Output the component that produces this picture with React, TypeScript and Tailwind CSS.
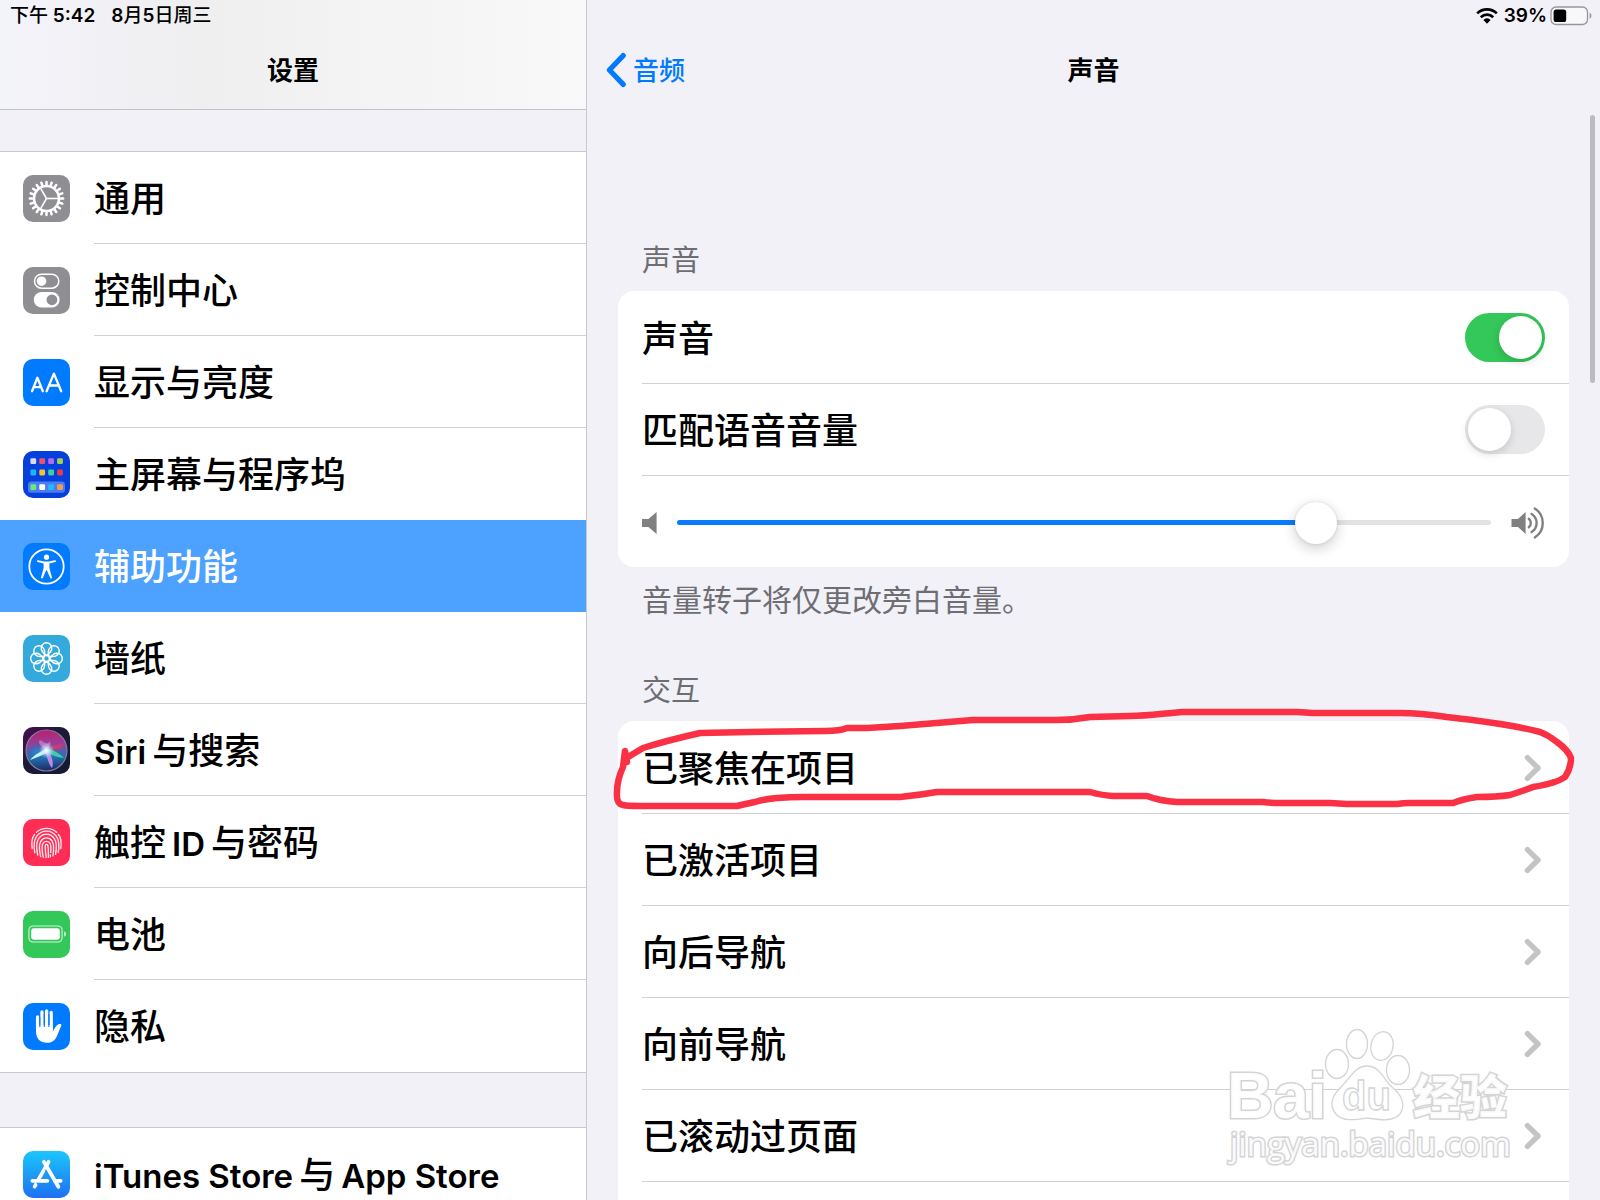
import { useState, type ReactNode } from "react";

function Tile({ bg, children }: { bg: string; children: ReactNode }) {
  return (
    <svg viewBox="0 0 47 47" className="size-[47px] flex-none" aria-hidden="true">
      <rect width="47" height="47" rx="10" fill={bg} />
      {children}
    </svg>
  );
}

const range = (n: number) => Array.from({ length: n }, (_, i) => i);

function GearIcon() {
  return (
    <Tile bg="#8e8e93">
      <g stroke="#fff" fill="none" transform="translate(23.5 23.5)">
        <circle r="12.4" strokeWidth="2.5" />
        {range(20).map((i) => (
          <path key={i} d="M13 0H16.6" strokeWidth="2.5" strokeLinecap="round" transform={`rotate(${i * 18})`} />
        ))}
        {[0, 120, 240].map((a) => (
          <path key={a} d="M0 0H12" strokeWidth="1.6" transform={`rotate(${a})`} />
        ))}
      </g>
    </Tile>
  );
}

function ControlIcon() {
  return (
    <Tile bg="#8e8e93">
      <rect x="11.5" y="7.2" width="24.3" height="14" rx="7" fill="none" stroke="#fff" strokeWidth="1.5" />
      <circle cx="18.5" cy="14.2" r="4.8" fill="#fff" />
      <rect x="10.8" y="25" width="25.8" height="15.6" rx="7.8" fill="#fff" />
      <circle cx="28.9" cy="32.8" r="5.4" fill="#8e8e93" />
    </Tile>
  );
}

function DisplayIcon() {
  return (
    <Tile bg="#007aff">
      <g fill="none" stroke="#fff" strokeWidth="2.3" strokeLinecap="round" strokeLinejoin="round">
        <path d="M9 32.3 14.4 18.8 19.8 32.3M10.8 28.1H18" />
        <path d="M23.6 32.3 30.9 14.6 38.2 32.3M26.1 26.5H35.7" />
      </g>
    </Tile>
  );
}

const dockDots = [
  ["#d9dbe6", "#f0506a", "#b06cf6", "#a4d24c"],
  ["#1fb4f8", "#f7c32e", "#3bd0a8", "#ef3b45"],
  ["#67ea78", "#ffffff", "#22bdf8", "#f79a4e"],
];

function HomeIcon() {
  return (
    <Tile bg="#0640dc">
      <rect x="5" y="30.4" width="37" height="11.4" rx="3.4" fill="#4d7cf0" />
      {dockDots.map((row, r) =>
        row.map((c, i) => (
          <rect key={`${r}-${i}`} x={7.4 + i * 8.9} y={[7.3, 18.6, 33.2][r]} width="5.8" height="5.8" rx="1.3" fill={c} />
        )),
      )}
    </Tile>
  );
}

function AccessIcon() {
  return (
    <Tile bg="#007aff">
      <circle cx="23.5" cy="23.5" r="17.2" fill="none" stroke="#fff" strokeWidth="1.8" />
      <circle cx="23.5" cy="14.2" r="2.6" fill="#fff" />
      <path
        d="M15 17.2 21.5 18.4H25.5L32 17.2A.8.8 0 0 1 32.3 18.9L26.4 20.5V25L28.9 34.2A.9.9 0 0 1 27.2 34.9L23.9 27.2H23.1L19.8 34.9A.9.9 0 0 1 18.1 34.2L20.6 25V20.5L14.7 18.9A.8.8 0 0 1 15 17.2Z"
        fill="#fff"
      />
    </Tile>
  );
}

function WallpaperIcon() {
  return (
    <Tile bg="#34aadc">
      <g transform="translate(23.5 23.5)" fill="none" stroke="#fff" strokeWidth="1.4">
        {range(8).map((i) => (
          <path
            key={i}
            d="M0 -3.2C-3.4 -5.4 -5.5 -8 -5.2 -10.8A5.2 5 0 0 1 5.2 -10.8C5.5 -8 3.4 -5.4 0 -3.2Z"
            transform={`rotate(${i * 45})`}
          />
        ))}
        <circle r="2.9" />
      </g>
    </Tile>
  );
}

function SiriIcon() {
  return (
    <svg viewBox="0 0 47 47" className="size-[47px] flex-none" aria-hidden="true">
      <defs>
        <linearGradient id="siri-bg" x1="0" y1="0" x2="1" y2="1">
          <stop offset="0" stopColor="#4a0f52" />
          <stop offset=".45" stopColor="#1b1a38" />
          <stop offset="1" stopColor="#141a33" />
        </linearGradient>
        <linearGradient id="siri-orb" x1=".45" y1="0" x2=".5" y2="1">
          <stop offset="0" stopColor="#b8206f" />
          <stop offset=".4" stopColor="#93449f" />
          <stop offset=".65" stopColor="#2473b4" />
          <stop offset="1" stopColor="#1c2a63" />
        </linearGradient>
        <radialGradient id="siri-glow">
          <stop offset="0" stopColor="#fff" />
          <stop offset=".35" stopColor="#d5f4ff" stopOpacity=".8" />
          <stop offset="1" stopColor="#7fd0ff" stopOpacity="0" />
        </radialGradient>
        <radialGradient id="siri-blue">
          <stop offset="0" stopColor="#1a93d6" stopOpacity=".95" />
          <stop offset="1" stopColor="#1a63b6" stopOpacity="0" />
        </radialGradient>
      </defs>
      <rect width="47" height="47" rx="10" fill="url(#siri-bg)" />
      <circle cx="23.5" cy="23.5" r="20.5" fill="url(#siri-orb)" stroke="#8c7f9e" strokeWidth="1.1" />
      <circle cx="13.5" cy="25" r="10.5" fill="url(#siri-blue)" />
      <path d="M23 23C30 18 37 16 41 18 37 22 31 23 23 24Z" fill="#dd3a5e" opacity=".75" />
      <path d="M23 23C18 20 14 15 17 13 21 15 25 19 27 14 28 19 26 22 23 23Z" fill="#d58fd5" opacity=".6" />
      <path d="M24 22C18 24 11 28 7 33 14 30 21 28 25 25Z" fill="#d9fbff" opacity=".95" />
      <path d="M24 21.5C31 23 37 27 41 31 34 30.5 28 28 24 25Z" fill="#3fd6ab" opacity=".9" />
      <path d="M22 24C24.5 31 25.5 37 29 41 31.5 35 28 28 25 23Z" fill="#d18df0" opacity=".9" />
      <circle cx="23.5" cy="23.5" r="8" fill="url(#siri-glow)" />
    </svg>
  );
}

function TouchIdIcon() {
  return (
    <Tile bg="#ff2d55">
      <g fill="none" stroke="#fff" strokeOpacity=".9" strokeWidth="1.35" strokeLinecap="round">
        <path d="M13.5 13.2A15 15 0 0 1 33.6 13.2" />
        <path d="M9.2 29.6C8.2 23 9 18.6 11.6 15.4M35.4 15.4C38 18.6 38.8 23 37.8 29.6" />
        <path d="M11.8 33.6C10.6 27 10.8 21.6 13.4 17.6 18.6 10.2 28.4 10.2 33.6 17.6 36.2 21.6 36.4 27 35.2 33.4" />
        <path d="M14.7 36C13.2 29 13.2 23.8 15.4 20 19.4 13.6 27.6 13.6 31.6 20 33.8 23.8 33.8 29 32.5 35.4" />
        <path d="M17.6 37.6C16 30.6 15.6 25.4 18 21.8 20.8 17.8 26.2 17.8 29 21.8 31 25 30.8 31 30 36.8" />
        <path d="M20.3 38.4C19 32.6 18.2 27 20.2 24 21.9 21.8 25.1 21.8 26.8 24 28.4 26.6 28 30.4 27.7 33.4M27.4 35.8V37.8" />
        <path d="M23.2 38.6C22.8 34 21.4 27.6 22.6 25.8 23.2 25.2 24 25.2 24.6 26 25.6 28.6 25.4 33.6 25.4 38.4" />
      </g>
    </Tile>
  );
}

function BatteryTileIcon() {
  return (
    <Tile bg="#34c759">
      <rect x="5.9" y="15" width="33.2" height="16" rx="4.2" fill="none" stroke="#fff" strokeOpacity=".8" strokeWidth="1.1" />
      <rect x="8.2" y="17.3" width="28.6" height="11.4" rx="2.4" fill="#fff" />
      <path d="M41.2 20.3C43.6 21.4 43.6 24.6 41.2 25.7Z" fill="#fff" fillOpacity=".8" />
    </Tile>
  );
}

function PrivacyIcon() {
  return (
    <Tile bg="#007aff">
      <g stroke="#fff" strokeWidth="3.3" strokeLinecap="round" fill="none">
        <path d="M14.6 14V27M19 9V26M23.6 7.8V26M28.2 9.4V26" />
      </g>
      <path
        d="M13 22H29.9V28.4C32.2 24.8 33.2 22.2 35.6 21.3 37 20.8 38.8 21.2 38.3 22.6L34.2 32.4C32.2 37.2 29 39.8 24 39.8 17 39.8 13 35.4 13 28.6Z"
        fill="#fff"
      />
      <path d="M16.8 14V24M21.3 11V24M25.9 11V24" stroke="#007aff" strokeWidth="1.1" />
    </Tile>
  );
}

function AppStoreIcon() {
  return (
    <svg viewBox="0 0 47 47" className="size-[47px] flex-none" aria-hidden="true">
      <defs>
        <linearGradient id="store" x1="0" y1="0" x2="0" y2="1">
          <stop offset="0" stopColor="#1cc6fb" />
          <stop offset="1" stopColor="#1d70f2" />
        </linearGradient>
      </defs>
      <rect width="47" height="47" rx="10" fill="url(#store)" />
      <g stroke="#fff" strokeWidth="3.7" strokeLinecap="round" fill="none">
        <path d="M25.6 10.8 15.4 28.6M12.6 33.8 11.6 35.6" />
        <path d="M20.9 10.8 35.4 35.8" />
        <path d="M9.3 29.8H24.4M31.6 29.8H37.7" />
      </g>
      <path d="M22.2 18.6 33.4 38" stroke="#1d93f6" strokeWidth="1" />
    </svg>
  );
}

const mainItems = [
  { label: "通用", icon: <GearIcon /> },
  { label: "控制中心", icon: <ControlIcon /> },
  { label: "显示与亮度", icon: <DisplayIcon /> },
  { label: "主屏幕与程序坞", icon: <HomeIcon /> },
  { label: "辅助功能", icon: <AccessIcon /> },
  { label: "墙纸", icon: <WallpaperIcon /> },
  { label: "Siri与搜索", icon: <SiriIcon /> },
  { label: "触控ID与密码", icon: <TouchIdIcon /> },
  { label: "电池", icon: <BatteryTileIcon /> },
  { label: "隐私", icon: <PrivacyIcon /> },
];
const storeItems = [{ label: "iTunes Store 与 App Store", icon: <AppStoreIcon /> }];
const selected = "辅助功能";

/* Latin runs sit slightly smaller and heavier than the Chinese around them. */
function MixedLabel({ text }: { text: string }) {
  const parts = text.split(/([A-Za-z][A-Za-z ]*[A-Za-z])/).filter(Boolean);
  return (
    <span className="flex items-baseline gap-[6px]">
      {parts.map((part) => (
        <span key={part} className={/[A-Za-z]/.test(part) ? "text-[33px] font-semibold" : ""}>
          {part}
        </span>
      ))}
    </span>
  );
}

function NavGroup({ items }: { items: typeof mainItems }) {
  return (
    <ul className="flex-none border-y border-[#c9c9cd] bg-white">
      {items.map((item, i) => {
        const active = item.label === selected;
        const line = !active && i < items.length - 1 && items[i + 1].label !== selected;
        return (
          <li key={item.label}>
            <button
              type="button"
              aria-current={active ? "page" : undefined}
              className={`flex h-[92px] w-full items-center pl-[23px] text-left ${active ? "bg-[#4da1ff] text-white" : "text-black"}`}
            >
              {item.icon}
              <span
                className={`ml-6 flex h-full flex-1 items-center border-b pt-[2px] text-4xl font-medium whitespace-nowrap ${line ? "border-[#d1d1d4]" : "border-transparent"}`}
              >
                <MixedLabel text={item.label} />
              </span>
            </button>
          </li>
        );
      })}
    </ul>
  );
}

function Toggle({ label, initial }: { label: string; initial: boolean }) {
  const [on, setOn] = useState(initial);
  return (
    <label className="flex h-[92px] items-center justify-between border-b border-[#d1d1d4] pr-6 text-4xl font-medium">
      <span className="pt-[2px]">{label}</span>
      <input
        type="checkbox"
        role="switch"
        checked={on}
        onChange={(e) => setOn(e.target.checked)}
        className="flex h-[49px] w-20 appearance-none items-center rounded-full bg-[#e7e7e9] p-[3px] before:size-[43px] before:rounded-full before:bg-white before:shadow-[0_3px_8px_rgba(0,0,0,0.15)] checked:justify-end checked:bg-[#34c759]"
      />
    </label>
  );
}

function VolumeSlider() {
  const [value, setValue] = useState(80);
  return (
    <div className="flex h-[91px] items-center pt-[2px] pr-6">
      <svg viewBox="0 0 15 24" className="h-6 w-[15px] flex-none" fill="#808080" aria-hidden="true">
        <path d="M0 8H6.4L14.6 1V23L6.4 16H0Z" />
      </svg>
      <input
        type="range"
        aria-label="音量"
        value={value}
        onChange={(e) => setValue(Number(e.target.value))}
        style={{ background: `linear-gradient(to right, #0a7aff ${value}%, #e3e3e5 ${value}%)` }}
        className="mx-5 h-[5px] min-w-0 flex-1 appearance-none rounded-full [&::-webkit-slider-thumb]:size-[42px] [&::-webkit-slider-thumb]:appearance-none [&::-webkit-slider-thumb]:rounded-full [&::-webkit-slider-thumb]:bg-white [&::-webkit-slider-thumb]:shadow-[0_4px_14px_rgba(0,0,0,0.2),0_0_3px_rgba(0,0,0,0.12)]"
      />
      <svg viewBox="0 0 34 34" className="size-[34px] flex-none" aria-hidden="true">
        <path d="M.5 13H7L14.6 6V28L7 21H.5Z" fill="#808080" />
        <g fill="none" stroke="#808080" strokeWidth="2.4" strokeLinecap="round">
          <path d="M17.8 12.8A5.4 5.4 0 0 1 17.8 21.2" />
          <path d="M20.6 8A10.6 10.6 0 0 1 20.6 26" />
          <path d="M23.8 2.6A17 17 0 0 1 23.8 31.4" />
        </g>
      </svg>
    </div>
  );
}

function Chevron() {
  return (
    <svg viewBox="0 0 18 28" className="h-7 w-[18px] flex-none" fill="none" aria-hidden="true">
      <path d="M3.4 3.6 14 14 3.4 24.4" stroke="#c4c4c7" strokeWidth="5.4" strokeLinecap="round" strokeLinejoin="round" />
    </svg>
  );
}

function RedCircle() {
  return (
    <svg
      viewBox="618 722 951 92"
      preserveAspectRatio="none"
      className="pointer-events-none absolute inset-0 h-full w-full overflow-visible"
      fill="none"
      aria-hidden="true"
    >
      <path
        d="M627 762 625 751 623 767Q617 780 617 792Q616 804 623 805Q627 806 640 806H737Q745 804 755 802 765 799 777 798 790 797 803 797H900Q920 795 937 792H1090Q1100 795 1113 796H1147Q1160 801 1177 802H1263Q1270 803 1280 803H1330L1347 804H1397Q1403 803 1410 803H1453Q1463 799 1477 797 1497 797 1510 795 1520 792 1533 787 1557 783 1565 777 1571 768 1571 758 1568 750 1557 742 1548 735 1540 732 1510 724 1447 717 1420 713 1400 713H1313L1297 712H1183C1165 713 1150 716 1130 716L1090 717Q1073 720 1057 720H973L900 726 867 728H847Q840 731 825 731L750 732 700 733Q665 741 643 748L628 757"
        stroke="#fa3144"
        strokeWidth="6.5"
        strokeLinecap="round"
        strokeLinejoin="round"
      />
    </svg>
  );
}

function Watermark() {
  return (
    <svg
      viewBox="0 0 300 140"
      className="pointer-events-none absolute right-[80px] bottom-[30px] h-[140px] w-[300px] overflow-visible [font-family:'Open_Sans','Noto_Sans_CJK_SC',sans-serif]"
      fill="#fff"
      fillOpacity=".93"
      stroke="#d4d4d6"
      strokeWidth="1.3"
      aria-hidden="true"
    >
      <g paintOrder="stroke">
        <text x="7" y="88" fontSize="64" fontWeight="700" strokeWidth="3" fontFamily="Liberation Sans">
          Bai
        </text>
        <text x="193" y="84" fontSize="47" fontWeight="900" strokeWidth="3">
          经验
        </text>
        <text x="10" y="126" fontSize="33" strokeWidth="3">
          jingyan.baidu.com
        </text>
      </g>
      <ellipse cx="117" cy="34" rx="11.5" ry="14.5" />
      <ellipse cx="137" cy="14" rx="10.5" ry="14.5" />
      <ellipse cx="162" cy="16" rx="11" ry="14.5" transform="rotate(12 162 16)" />
      <ellipse cx="178" cy="40" rx="11.5" ry="14.5" />
      <path d="M147 36C160 36 164 50 172 57 182 65 186 75 180 84 173 92 160 90 147 88 134 90 122 92 115 83 108 72 114 64 122 56 130 48 135 36 147 36Z" />
      <text x="122" y="80" fontSize="40" fontWeight="700" fontFamily="Liberation Sans">
        du
      </text>
    </svg>
  );
}

const soundRows = ["已聚焦在项目", "已激活项目", "向后导航", "向前导航", "已滚动过页面"];

export default function App() {
  return (
    <div className="flex h-screen overflow-hidden bg-[#f2f1f8] text-black [font-family:Inter,'Noto_Sans_CJK_SC',sans-serif]">
      <aside className="flex w-[587px] flex-none flex-col border-r border-[#c9c9cd]">
        <header className="h-[110px] flex-none border-b border-[#c3c3c7] bg-linear-to-r from-[#f3f3fa] via-[#efeff0] via-35% to-[#f9f9fa]">
          <div className="flex h-8 items-center gap-4 pl-[10px] text-[19px] font-semibold">
            <span>
              <span className="font-medium">下午</span> 5:42
            </span>
            <span>
              8<span className="font-medium">月</span>5<span className="font-medium">日周三</span>
            </span>
          </div>
          <h1 className="flex h-[76px] items-center justify-center text-[26px] font-semibold">设置</h1>
        </header>
        <nav aria-label="设置" className="flex flex-col gap-[54px] pt-[41px]">
          <NavGroup items={mainItems} />
          <NavGroup items={storeItems} />
        </nav>
      </aside>

      <main className="relative flex min-w-0 flex-1 flex-col">
        <div className="flex h-8 flex-none items-center justify-end pr-2 text-[19px] font-semibold">
          <svg viewBox="0 0 22 16" className="mr-[6px] h-4 w-[22px]" fill="none" stroke="#000" strokeWidth="2.7" aria-hidden="true">
            <path d="M1.2 5.4A14 14 0 0 1 20.8 5.4" />
            <path d="M4.8 9.2A8.8 8.8 0 0 1 17.2 9.2" />
            <path d="M7.4 11.9A5 5 0 0 1 14.6 11.9L11 15.8Z" fill="#000" stroke="none" />
          </svg>
          39%
          <svg viewBox="0 0 42 20" className="ml-[3px] h-5 w-[42px]" aria-hidden="true">
            <rect x="1" y="1" width="36.5" height="17.5" rx="5" fill="#f8f8fb" stroke="#97979b" strokeWidth="1.3" />
            <rect x="3.6" y="3.6" width="12.6" height="12.4" rx="2.6" fill="#000" />
            <path d="M39.6 6.8C42 8 42 11.6 39.6 12.8Z" fill="#97979b" />
          </svg>
        </div>

        <header className="grid h-[76px] flex-none grid-cols-[1fr_auto_1fr] items-center text-[26px]">
          <a href="#audio" className="flex items-center gap-[6px] pl-[18px] font-medium text-[#007aff]">
            <svg viewBox="0 0 22 36" className="h-9 w-[22px]" fill="none" aria-hidden="true">
              <path d="M18.2 3.6 4.4 18 18.2 32.4" stroke="#007aff" strokeWidth="5.2" strokeLinecap="round" strokeLinejoin="round" />
            </svg>
            音频
          </a>
          <h2 className="font-semibold">声音</h2>
        </header>

        <div className="flex flex-1 flex-col px-[31px]">
          <h3 className="mt-[133px] pl-6 text-[29px] leading-10 text-[#6d6d72]">声音</h3>
          <section className="mt-[10px] flex-none rounded-2xl bg-white pt-px pl-6">
            <Toggle label="声音" initial={true} />
            <Toggle label="匹配语音音量" initial={false} />
            <VolumeSlider />
          </section>
          <p className="mt-[13px] pl-6 text-3xl leading-10 text-[#6d6d72]">音量转子将仅更改旁白音量。</p>

          <h3 className="mt-[51px] pl-6 text-[29px] leading-10 text-[#6d6d72]">交互</h3>
          <ul className="relative mt-[10px] flex-1 rounded-t-2xl bg-white pt-px">
            {soundRows.map((label, i) => (
              <li key={label} className="relative pl-6">
                <button
                  type="button"
                  className="flex h-[92px] w-full items-center justify-between border-b border-[#d1d1d4] pr-[27px] text-left text-4xl font-medium"
                >
                  <span className="pt-[2px]">{label}</span>
                  <Chevron />
                </button>
                {i === 0 && <RedCircle />}
              </li>
            ))}
          </ul>
        </div>
        <div className="absolute top-[115px] right-[5px] h-[268px] w-[5px] rounded-full bg-[#bbbbc0]" />
        <Watermark />
      </main>
    </div>
  );
}
